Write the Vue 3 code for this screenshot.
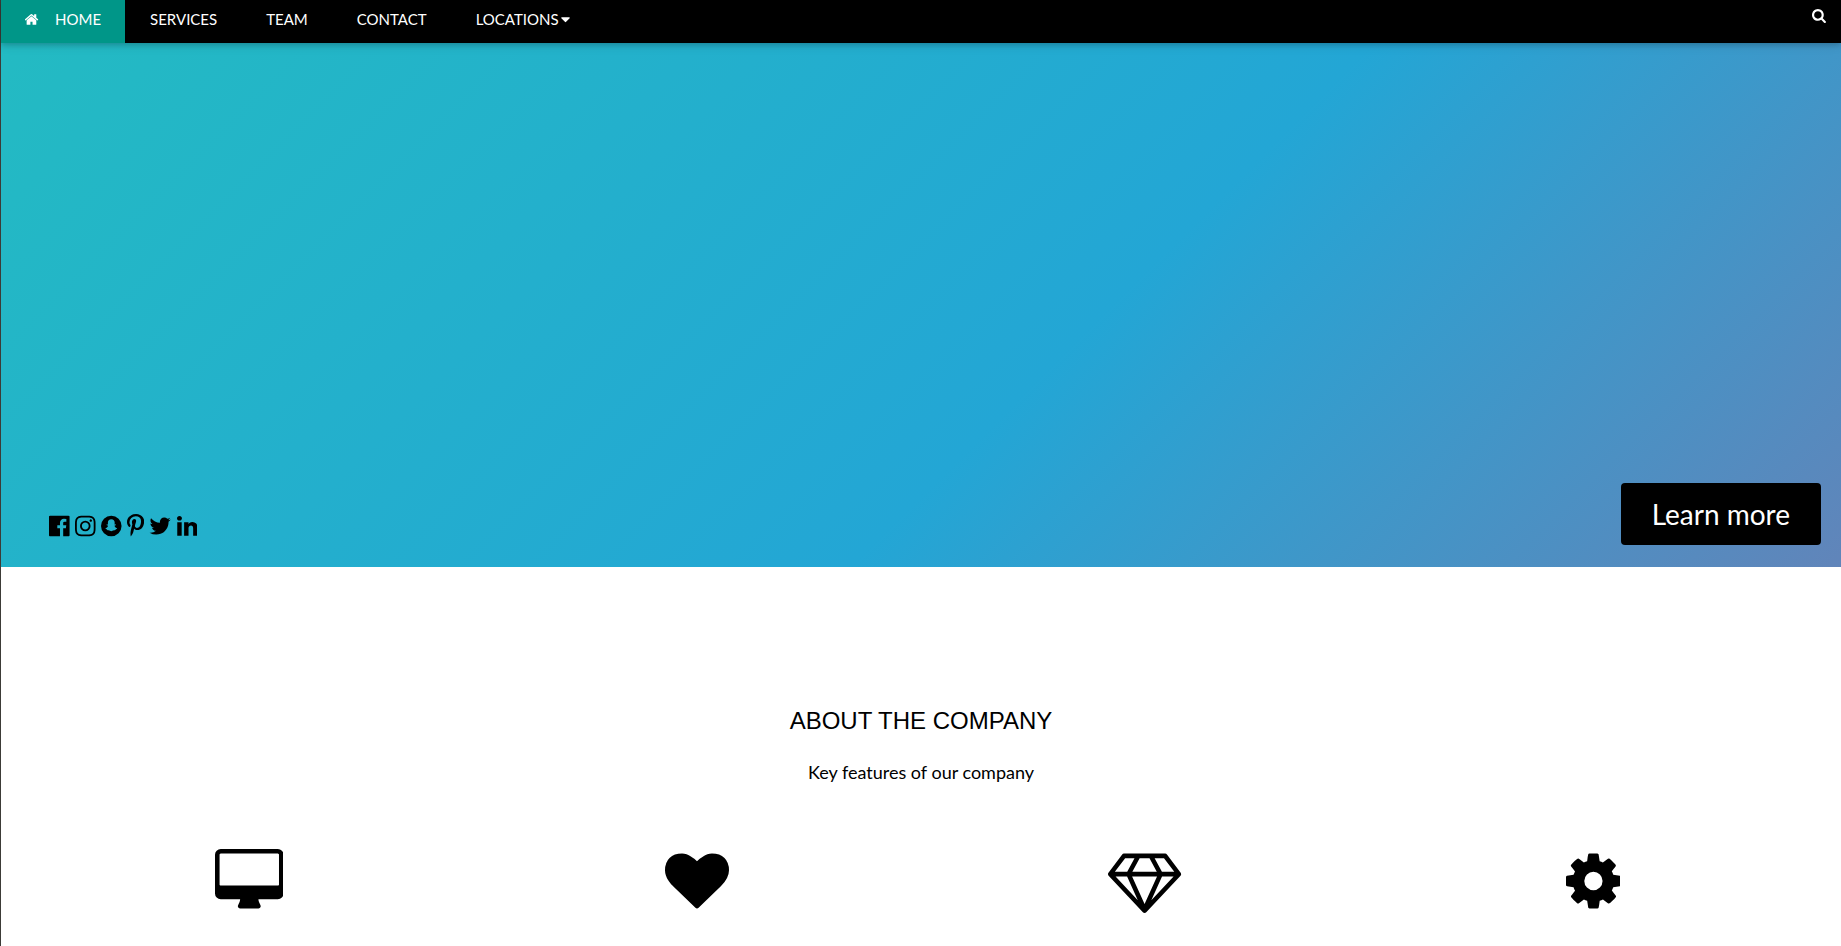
<script setup>
const links = ['SERVICES', 'TEAM', 'CONTACT']

const icons = {
  home: 'M1408 992v480q0 26-19 45t-45 19h-384v-384h-256v384h-384q-26 0-45-19t-19-45v-480q0-1 .5-3t.5-3l575-474 575 474q1 2 1 6zm223-69l-62 74q-8 9-21 11h-3q-13 0-21-7l-692-577-692 577q-12 8-24 7-13-2-21-11l-62-74q-8-10-7-23.5t11-21.5l719-599q32-26 76-26t76 26l244 204v-195q0-14 9-23t23-9h192q14 0 23 9t9 23v408l219 182q10 8 11 21.5t-7 23.5z',
  search: 'M1216 832q0-185-131.5-316.5t-316.5-131.5-316.5 131.5-131.5 316.5 131.5 316.5 316.5 131.5 316.5-131.5 131.5-316.5zm512 832q0 52-38 90t-90 38q-54 0-90-38l-343-342q-179 124-399 124-143 0-273.5-55.5t-225-150-150-225-55.5-273.5 55.5-273.5 150-225 225-150 273.5-55.5 273.5 55.5 225 150 150 225 55.5 273.5q0 220-124 399l343 343q37 37 37 90z',
  caret: 'M1408 704q0 26-19 45l-448 448q-19 19-45 19t-45-19l-448-448q-19-19-19-45t19-45 45-19h896q26 0 45 19t19 45z',
}

const socials = [
  {
    name: 'Facebook',
    box: '128 0 1536 1792',
    path: 'M1579 128q35 0 60 25t25 60v1366q0 35-25 60t-60 25h-391v-595h199l30-232h-229v-148q0-56 23.5-84t91.5-28l122-1v-207q-63-9-178-9-136 0-217.5 80t-81.5 226v171h-200v232h200v595h-735q-35 0-60-25t-25-60v-1366q0-35 25-60t60-25h1366z',
  },
  {
    name: 'Instagram',
    box: '128 0 1536 1792',
    path: 'M1152 896q0-106-75-181t-181-75-181 75-75 181 75 181 181 75 181-75 75-181zm138 0q0 164-115 279t-279 115-279-115-115-279 115-279 279-115 279 115 115 279zm108-410q0 38-27 65t-65 27-65-27-27-65 27-65 65-27 65 27 27 65zm-502-220q-7 0-76.5-.5t-105.5 0-96.5 3-103 10-71.5 18.5q-50 20-88 58t-58 88q-11 29-18.5 71.5t-10 103-3 96.5 0 105.5.5 76.5-.5 76.5 0 105.5 3 96.5 10 103 18.5 71.5q20 50 58 88t88 58q29 11 71.5 18.5t103 10 96.5 3 105.5 0 76.5-.5 76.5.5 105.5 0 96.5-3 103-10 71.5-18.5q50-20 88-58t58-88q11-29 18.5-71.5t10-103 3-96.5 0-105.5-.5-76.5.5-76.5 0-105.5-3-96.5-10-103-18.5-71.5q-20-50-58-88t-88-58q-29-11-71.5-18.5t-103-10-96.5-3-105.5 0-76.5.5zm768 630q0 229-5 317-10 208-124 322t-322 124q-88 5-317 5t-317-5q-208-10-322-124t-124-322q-5-88-5-317t5-317q10-208 124-322t322-124q88-5 317-5t317 5q208 10 322 124t124 322q5 88 5 317z',
  },
  {
    name: 'Snapchat',
    box: '128 0 1536 1792',
    path: 'M896 128a768 768 0 1 0 0 1536a768 768 0 1 0 0-1536zM896 400C1060 400 1150 510 1150 650L1144 780Q1170 790 1205 775Q1245 770 1250 800Q1250 835 1160 865Q1135 880 1145 915Q1200 1040 1320 1070Q1345 1080 1325 1110Q1300 1135 1220 1150Q1205 1170 1200 1200Q1185 1215 1110 1205Q1050 1200 990 1245Q940 1280 896 1280Q852 1280 802 1245Q742 1200 682 1205Q607 1215 592 1200Q587 1170 572 1150Q492 1135 467 1110Q447 1080 472 1070Q592 1040 647 915Q657 880 632 865Q542 835 542 800Q547 770 587 775Q622 790 648 780L642 650C642 510 732 400 896 400z',
  },
  {
    name: 'Pinterest',
    box: '256 0 1280 1792',
    path: 'M256 597q0-108 37.5-203.5t103.5-166.5 152-123 185-78 202-26q158 0 294 66.5t221 193.5 85 287q0 96-19 188t-60 177-100 149.5-145 103-189 38.5q-68 0-135-32t-96-88q-10 39-28 112.5t-23.5 95-20.5 71-26 71-32 62.5-46 77.5-62 86.5l-14 5-9-10q-15-157-15-188 0-92 21.5-206.5t66.5-287.5 52-203q-32-65-32-169 0-83 52-156t132-73q61 0 95 40.5t34 102.5q0 66-44 191t-44 187q0 63 45 104.5t109 41.5q55 0 102-25t78.5-68 56-95 38-110.5 20-111 6.5-99.5q0-173-109.5-269.5t-285.5-96.5q-200 0-334 129.5t-134 328.5q0 44 12.5 85t27 65 27 45.5 12.5 30.5q0 28-15 73t-37 45q-2 0-17-3-51-15-90.5-56t-61-94.5-32.5-108-11-106.5z',
  },
  {
    name: 'Twitter',
    box: '64 0 1664 1792',
    path: 'M1684 408q-67 98-162 167 1 14 1 42 0 130-38 259.5t-115.5 248.5-184.5 210.5-258 146-323 54.5q-271 0-496-145 35 4 78 4 225 0 401-138-105-2-188-64.5t-114-159.5q33 5 61 5 43 0 85-11-112-23-185.5-111.5t-73.5-205.5v-4q68 38 146 41-66-44-105-115t-39-154q0-88 44-163 121 149 294.5 238.5t371.5 99.5q-8-38-8-74 0-134 94.5-228.5t228.5-94.5q140 0 236 102 109-21 205-78-37 115-142 178 93-10 186-50z',
  },
  {
    name: 'LinkedIn',
    box: '128 0 1536 1792',
    path: 'M477 625v991h-330v-991h330zm21-306q1 73-50.5 122t-135.5 49h-2q-82 0-132-49t-50-122q0-74 51.5-122.5t134.5-48.5 133 48.5 51 122.5zm1166 729v568h-329v-530q0-105-40.5-164.5t-126.5-59.5q-63 0-105.5 34.5t-63.5 85.5q-11 30-11 81v553h-329q2-399 2-647t-1-296l-1-48h329v144h-2q20-32 41-56t56.5-52 87-43.5 114.5-15.5q171 0 275 113.5t104 332.5z',
  },
]

const features = [
  {
    name: 'Desktop',
    box: '-64 0 1920 1792',
    path: 'M1728 992v-832q0-13-9.5-22.5t-22.5-9.5h-1600q-13 0-22.5 9.5t-9.5 22.5v832q0 13 9.5 22.5t22.5 9.5h1600q13 0 22.5-9.5t9.5-22.5zm128-832v1088q0 66-47 113t-113 47h-544q0 37 16 77.5t32 71 16 43.5q0 26-19 45t-45 19h-512q-26 0-45-19t-19-45q0-14 16-44t32-70 16-78h-544q-66 0-113-47t-47-113v-1088q0-66 47-113t113-47h1600q66 0 113 47t47 113z',
  },
  {
    name: 'Heart',
    box: '0 0 1792 1792',
    path: 'M896 1664q-26 0-44-18l-624-602q-10-8-27.5-26t-55.5-65.5-68-97.5-53.5-121-23.5-138q0-220 127-344t351-124q62 0 126.5 21.5t120 58 95.5 68.5 76 68q36-36 76-68t95.5-68.5 120-58 126.5-21.5q224 0 351 124t127 344q0 221-229 450l-623 600q-18 18-44 18z',
  },
  {
    name: 'Diamond',
    box: '-128 0 2048 1792',
    path: 'M84 768l623 665-300-665zM896 1540l349-772h-698zM410 640l204-384h-262l-288 384zM1085 1433l623-665h-323zM554 640h684l-204-384h-276zM1382 640h346l-288-384h-262zM1523 154l384 512q14 18 13 41.5t-17 40.5l-960 1024q-18 20-47 20t-47-20l-960-1024q-16-17-17-40.5t13-41.5l384-512q18-26 51-26h1152q33 0 51 26z',
  },
  {
    name: 'Settings',
    box: '128 0 1536 1792',
    path: 'M1152 896q0-106-75-181t-181-75-181 75-75 181 75 181 181 75 181-75 75-181zm512-109v222q0 12-8 23t-20 13l-185 28q-19 54-39 91 35 50 107 138 10 12 10 25t-9 23q-27 37-99 108t-94 71q-12 0-26-9l-138-108q-44 23-91 38-16 136-29 186-7 28-36 28h-222q-14 0-24.5-8.5t-11.5-21.5l-28-184q-49-16-90-37l-141 107q-10 9-25 9-14 0-25-11-126-114-165-168-7-10-7-23 0-12 8-23 15-21 51-66.5t54-70.5q-27-50-41-99l-183-27q-13-2-21-12.5t-8-23.5v-222q0-12 8-23t19-13l186-28q14-46 39-92-40-57-107-138-10-12-10-24 0-10 9-23 26-36 98.5-107.5t94.5-71.5q13 0 26 10l138 107q44-23 91-38 16-136 29-186 7-28 36-28h222q14 0 24.5 8.5t11.5 21.5l28 184q49 16 90 37l142-107q9-9 24-9 13 0 25 10 129 119 165 170 7 8 7 22 0 12-8 23-15 21-51 66.5t-54 70.5q26 50 41 98l183 28q13 2 21 12.5t8 23.5z',
  },
]
</script>

<template>
  <div class="page">
    <nav class="bar">
      <a href="#" class="item active">
        <svg class="icon home" viewBox="64 0 1664 1792" aria-hidden="true"><path :d="icons.home" /></svg>
        HOME
      </a>
      <a v-for="link in links" :key="link" href="#" class="item">{{ link }}</a>
      <button type="button" class="item">
        LOCATIONS<svg class="icon caret" viewBox="384 0 1024 1792" aria-hidden="true"><path :d="icons.caret" /></svg>
      </button>
      <a href="#" class="search" aria-label="Search">
        <svg class="icon" viewBox="64 0 1664 1792" aria-hidden="true"><path :d="icons.search" /></svg>
      </a>
    </nav>

    <header class="hero">
      <div class="socials">
        <a v-for="s in socials" :key="s.name" href="#" :aria-label="s.name">
          <svg :viewBox="s.box" aria-hidden="true"><path fill-rule="evenodd" :d="s.path" /></svg>
        </a>
      </div>
      <button type="button" class="learn">Learn more</button>
    </header>

    <section class="about">
      <h3>ABOUT THE COMPANY</h3>
      <p>Key features of our company</p>
      <div class="features">
        <div v-for="f in features" :key="f.name" class="feature">
          <svg :viewBox="f.box" role="img" :aria-label="f.name"><path fill-rule="evenodd" :d="f.path" /></svg>
        </div>
      </div>
    </section>
  </div>
</template>

<style>
body {
  background: #fff;
  overflow: hidden;
}
</style>

<style scoped>
.page {
  box-sizing: border-box;
  min-height: 100vh;
  border-left: 1px solid #3c3b37;
  font: 15px/23px Lato, sans-serif;
  color: #000;
}

svg {
  display: block;
  fill: currentColor;
}

.bar {
  position: relative;
  display: flex;
  gap: 1px;
  background: #000;
  color: #fff;
  box-shadow: 0 2px 5px rgba(0, 0, 0, 0.16), 0 2px 10px rgba(0, 0, 0, 0.12);
}

.item {
  display: flex;
  align-items: center;
  padding: 8px 24px 12px;
  border: 0;
  background: none;
  color: inherit;
  font: inherit;
  text-decoration: none;
}

.active {
  background: #009688;
}

.icon {
  height: 15px;
}

.home {
  width: 14px;
  margin-right: 16px;
}

.caret {
  width: 9px;
  margin-left: 2px;
}

.search {
  margin-left: auto;
  padding: 8px 15px;
  color: inherit;
}

.hero {
  display: flex;
  align-items: flex-end;
  justify-content: space-between;
  box-sizing: border-box;
  height: 524px;
  padding: 0 20px 22px 48px;
  background: linear-gradient(-45deg, #ee7752, #e73c7e, #23a6d5, #23d5ab) 18% 50% / 400% 400%;
}

.socials {
  display: flex;
  gap: 5px;
  margin-bottom: 7px;
}

.socials a {
  display: flex;
  justify-content: center;
  color: #000;
}

.socials a:not(:nth-child(4)) {
  min-width: 21px;
}

.socials svg {
  height: 24px;
}

.learn {
  padding: 12px 31px;
  border: 0;
  border-radius: 4px;
  background: #000;
  color: #fff;
  font: 28px/38px Lato, sans-serif;
}

.about {
  padding: 128px 24px 32px;
  text-align: center;
}

h3 {
  margin: 8px 0 20px;
  font: 24px/36px "Liberation Sans", sans-serif;
}

p {
  margin: 0;
  font-size: 18px;
  line-height: 27px;
}

.features {
  display: grid;
  grid-template-columns: repeat(4, 1fr);
  margin-top: 63px;
}

.feature {
  display: flex;
  justify-content: center;
}

.feature svg {
  height: 64px;
}
</style>
